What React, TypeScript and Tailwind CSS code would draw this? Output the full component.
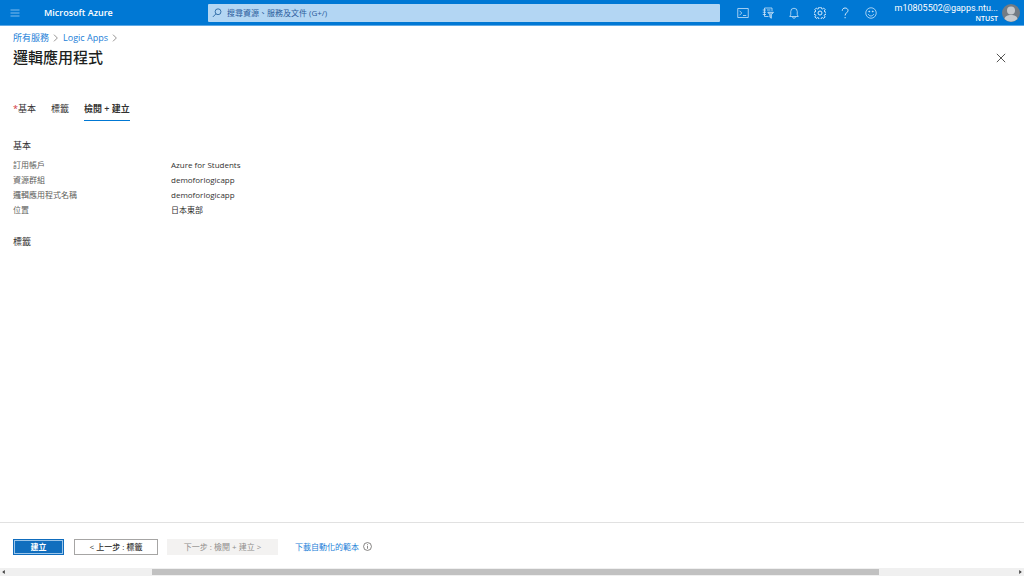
import type { ReactNode } from 'react';
import { clsx } from 'clsx';

interface IconProps {
	readonly children: ReactNode;
	readonly className?: string;
}

const Icon = ({ children, className }: IconProps) => (
	<svg
		viewBox="0 0 24 24"
		className={clsx('shrink-0', className ?? 'size-3')}
		fill="none"
		stroke="currentColor"
		strokeWidth="1.5"
		aria-hidden="true"
	>
		{children}
	</svg>
);

const gearPath =
	'M10 1.500h4l.7 3.200 1.900.8 2.800-1.800 2.900 2.900-1.800 2.800.8 1.900 3.200.7v4l-3.200.7-.8 1.900 1.800 2.800-2.900 2.900-2.800-1.800-1.900.8-.7 3.200h-4l-.7-3.200-1.900-.8-2.800 1.800-2.900-2.900 1.800-2.800-.8-1.900-3.200-.7v-4l3.200-.7.8-1.900-1.800-2.800 2.900-2.900 2.800 1.800 1.900-.8z';

const toolbar = [
	{
		label: 'Cloud Shell',
		icon: (
			<Icon>
				<path d="M1.500 3h21v18h-21zM5 7.500l4.500 4.500L5 16.500M12 17h6.500" />
			</Icon>
		)
	},
	{
		label: '目錄 + 訂用帳戶',
		icon: (
			<Icon>
				<path d="M20 8V2H5v17h8M1.500 6H8M1.500 10.500H8M1.500 15H8M10 6h7" />
				<path d="M11.500 10.500h11.500l-4.300 5v7l-3-2v-5z" fill="currentColor" fillOpacity="0.500" />
			</Icon>
		)
	},
	{
		label: '通知',
		icon: (
			<Icon>
				<path d="M3.500 19h17l-2-3.500V9a6.500 6.500 0 0 0-13 0v6.500zM9 19.500a3 3 0 0 0 6 0" />
			</Icon>
		)
	},
	{
		label: '設定',
		icon: (
			<Icon>
				<path d={gearPath} transform="translate(0 -1.500)" strokeWidth="2" />
				<circle cx="12" cy="12" r="4" strokeWidth="2" />
			</Icon>
		)
	},
	{
		label: '說明',
		icon: (
			<Icon>
				<path d="M6.500 7.500C6.500 4 9 2 12.200 2S18 4 18 7c0 4-5.800 5-5.800 10M12.200 20v2.500" strokeWidth="2" />
			</Icon>
		)
	},
	{
		label: '意見反應',
		icon: (
			<Icon>
				<circle cx="12" cy="12" r="10.500" />
				<path d="M6.500 14c1 2.500 3 4 5.500 4s4.500-1.500 5.500-4" />
				<circle cx="8.500" cy="9" r="1" fill="currentColor" />
				<circle cx="15.500" cy="9" r="1" fill="currentColor" />
			</Icon>
		)
	}
];

const details = [
	{ label: '訂用帳戶', value: 'Azure for Students' },
	{ label: '資源群組', value: 'demoforlogicapp' },
	{ label: '邏輯應用程式名稱', value: 'demoforlogicapp' },
	{ label: '位置', value: '日本東部' }
];

const Header = () => (
	<header className="flex h-[26px] shrink-0 items-center border-b border-[#5ea9e6] bg-[#0078d4] text-white">
		<button type="button" aria-label="功能表" className="flex w-[30px] justify-center text-[#a8d2f5]">
			<Icon>
				<path d="M3 6h18M3 12h18M3 18h18" />
			</Icon>
		</button>
		<a href="#" className="ml-[14px] w-[164px] text-[9px] font-semibold">
			Microsoft Azure
		</a>
		<label className="flex h-[18px] flex-1 items-center gap-[5px] rounded-[1px] bg-[#b3d6f3] pl-1 text-[#1f5f9e]">
			<Icon className="size-[10px]">
				<circle cx="14.500" cy="9" r="7" strokeWidth="2" />
				<path d="M9.500 14L2 21.500" strokeWidth="2" />
			</Icon>
			<input
				type="text"
				aria-label="搜尋"
				placeholder="搜尋資源、服務及文件 (G+/)"
				className="min-w-0 flex-1 bg-transparent text-[8px] outline-none placeholder:text-[#2b5c9c]"
			/>
		</label>
		<div className="ml-[10px] grid w-[154px] grid-cols-6">
			{toolbar.map(item => (
				<button key={item.label} type="button" aria-label={item.label} className="flex justify-center text-[#d6eafb]">
					{item.icon}
				</button>
			))}
		</div>
		<button type="button" className="flex w-[140px] items-center justify-end gap-1 pr-1 text-right">
			<span>
				<span className="block font-['Roboto',sans-serif] text-[9px] leading-[11px]">m10805502@gapps.ntu...</span>
				<span className="block text-[7px] leading-[9px] font-semibold">NTUST</span>
			</span>
			<svg viewBox="0 0 36 36" className="size-[18px] shrink-0" aria-hidden="true">
				<circle cx="18" cy="18" r="18" fill="#737b83" />
				<circle cx="18" cy="13" r="8" fill="#c5c9cd" />
				<path d="M5 30c1-6 6-8 13-8s12 2 13 8a18 18 0 0 1-26 0z" fill="#c5c9cd" />
			</svg>
		</button>
	</header>
);

const Separator = () => (
	<Icon className="size-2 text-[#605e5c]">
		<path d="M6 2l10 10L6 22" strokeWidth="2" />
	</Icon>
);

const Footer = () => (
	<footer className="flex h-[46px] shrink-0 items-center border-t border-[#e1e1e1] px-[13px] pt-[2px] text-[8px] leading-[13px] text-[#323130]">
		<button
			type="button"
			className="h-4 w-[51px] border border-[#0f6cbd] bg-[#106ebe] pb-px font-bold text-white outline-1 -outline-offset-2 outline-[#9cc6ea]"
		>
			建立
		</button>
		<button type="button" className="ml-[10px] h-4 w-[84px] border border-[#a6a5a4] pb-px font-medium">
			&lt; 上一步 : 標籤
		</button>
		<button type="button" disabled className="ml-[9px] h-4 w-[111px] bg-[#f3f2f1] pb-px text-[#8f8d8b]">
			下一步 : 檢閱 + 建立 &gt;
		</button>
		<a href="#" className="ml-[17px] pb-px text-[#1b80d8]">
			下載自動化的範本
		</a>
		<button type="button" aria-label="資訊" className="ml-1">
			<Icon className="size-[9px] text-[#605e5c]">
				<circle cx="12" cy="12" r="10.500" strokeWidth="2" />
				<path d="M12 10v8M12 5.500v2" strokeWidth="2" />
			</Icon>
		</button>
	</footer>
);

const ScrollBar = () => (
	<div className="flex h-2 shrink-0 items-center justify-between bg-[#f0f0f0] px-[2px] text-[#404040]">
		<svg viewBox="0 0 4 6" className="h-1 w-[3px]" aria-hidden="true">
			<path d="M4 0v6L0 3z" fill="currentColor" />
		</svg>
		<div className="ml-[147px] h-[6px] flex-1 bg-[#c1c1c1]" />
		<svg viewBox="0 0 4 6" className="ml-[140px] h-1 w-[3px]" aria-hidden="true">
			<path d="M0 0v6l4-3z" fill="currentColor" />
		</svg>
	</div>
);

export default function App() {
	return (
		<div className="flex min-h-screen flex-col bg-white font-['Open_Sans','Noto_Sans_CJK_TC',sans-serif] text-[#323130]">
			<Header />
			<main className="flex-1 px-[13px] pt-[5px]">
				<nav className="flex h-[14px] items-center gap-[3px] text-[9px] text-[#1b80d8]">
					<a href="#">所有服務</a>
					<Separator />
					<a href="#">Logic Apps</a>
					<Separator />
				</nav>
				<div className="flex h-[26px] items-center justify-between">
					<h1 className="pb-[2px] text-[15px] font-medium text-[#201f1e]">邏輯應用程式</h1>
					<button type="button" aria-label="關閉" className="mr-[5px]">
						<Icon className="size-[10px]">
							<path d="M2 2l20 20M22 2L2 22" strokeWidth="2" />
						</Icon>
					</button>
				</div>
				<div role="tablist" className="mt-7 flex h-[22px] gap-[15px] text-[9px] leading-5">
					<button type="button" role="tab" aria-selected="false" className="flex">
						<span className="text-[#d13438]">*</span>
						基本
					</button>
					<button type="button" role="tab" aria-selected="false" className="flex">
						標籤
					</button>
					<button
						type="button"
						role="tab"
						aria-selected="true"
						className="flex border-b border-[#0078d4] font-semibold"
					>
						檢閱 + 建立
					</button>
				</div>
				<h2 className="mt-4 text-[9px] leading-[18px]">基本</h2>
				<dl className="mt-[2px] text-[8px] leading-[15px]">
					{details.map(row => (
						<div key={row.label} className="flex">
							<dt className="w-[158px] text-[#605e5c]">{row.label}</dt>
							<dd>{row.value}</dd>
						</div>
					))}
				</dl>
				<h2 className="mt-4 text-[9px] leading-[18px]">標籤</h2>
			</main>
			<Footer />
			<ScrollBar />
		</div>
	);
}
